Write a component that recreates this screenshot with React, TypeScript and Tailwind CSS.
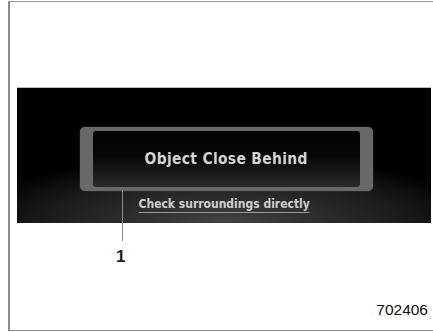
export default function App() {
  return (
    <div className="relative h-[332px] w-[433px] overflow-hidden bg-white font-['Liberation_Sans',Arial,sans-serif]">
      {/* figure frame, open on the right */}
      <div className="ml-[8px] mt-[1px] h-[330px] w-[425px] border-y border-l-2 border-[#8a8a8a] border-t-[#9a9a9a]">
        {/* screen panel */}
        <div className="ml-[7px] mt-[85px] h-[136px] w-[414px] border-t border-[#bdbdbd] bg-[radial-gradient(ellipse_65%_50%_at_50%_100%,#424242,#1c1c1c_65%,#000_100%)] pt-[39px]">
          <div className="ml-[63px] h-[64px] w-[293px] rounded-[5px] bg-[#686868] px-[13px] py-[4px] shadow-[0_0_2px_#444]">
            <div className="flex h-full items-center justify-center rounded-[3px] bg-[linear-gradient(#040404,#060606_45%,#2b2b2b)]">
              <span className="text-[16.5px] font-bold tracking-[0.4px] text-[#d4d4d4] font-['DejaVu_Sans',sans-serif] [transform:scaleX(0.84)]">
                Object Close Behind
              </span>
            </div>
          </div>
          <div className="mt-[6px] flex justify-center">
            <span className="border-b border-[#9a9a9a] pb-[1px] text-[12px] font-bold leading-[14px] text-[#cfcfcf] font-['DejaVu_Sans',sans-serif] [transform:scaleX(0.9)]">
              Check surroundings directly
            </span>
          </div>
        </div>
        <div className="mr-[5px] mt-[79px] text-right text-[15.5px] leading-none text-[#111]">702406</div>
      </div>

      {/* callout line and label */}
      <div className="absolute left-[122px] top-[190px] h-[51px] w-px bg-[#8c8c8c]" />
      <div className="absolute left-[116px] top-[248px] text-[17px] font-bold leading-none text-[#222]">1</div>
    </div>
  )
}
